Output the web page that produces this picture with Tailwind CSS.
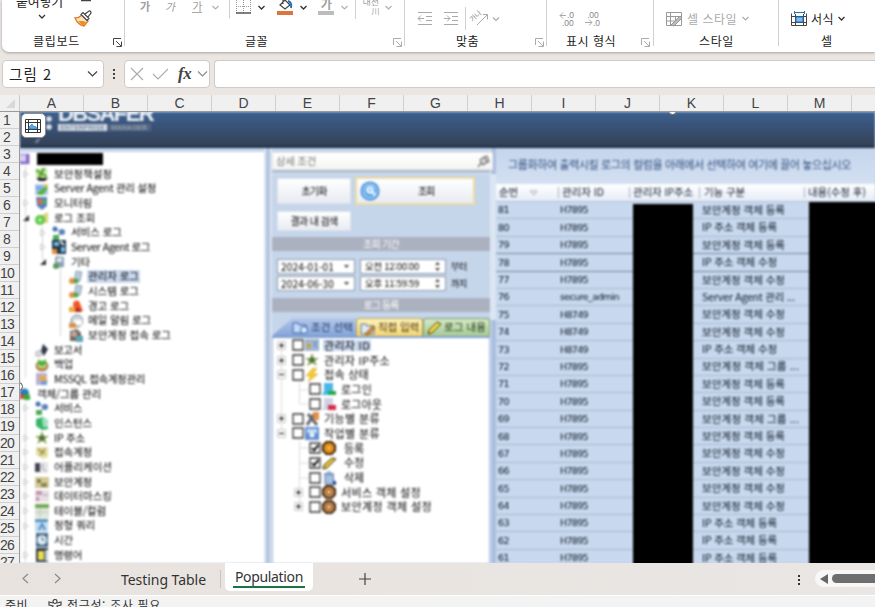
<!DOCTYPE html>
<html lang="ko">
<head>
<meta charset="utf-8">
<title>Population</title>
<script src="https://cdn.jsdelivr.net/npm/@tailwindcss/browser@4"></script>
</head>
<body class="w-[875px] h-[607px] overflow-hidden bg-[#ece6e3] font-['Noto_Sans_CJK_KR','Noto_Sans',sans-serif] text-[12px] leading-none text-[#222]">
<div class="flex h-[607px] w-[875px] flex-col overflow-hidden">

<!-- Ribbon -->
<header class="ml-[2px] flex h-[52px] shrink-0 rounded-bl-[7px] bg-white shadow-[0_1px_3px_rgba(0,0,0,0.3)]">
  <section class="relative flex w-[122px] flex-col">
    <div class="flex h-[32px] shrink-0 items-start overflow-hidden">
      <div class="ml-[14px] flex w-[50px] flex-col">
        <span data-w="47" class="-mt-[6px] h-[14px] self-start whitespace-nowrap text-[13px] leading-[14px]">붙여넣기</span>
        <svg class="mt-[6px] ml-[22px]" width="8" height="6" fill="none" stroke="#333" stroke-width="1.3"><path d="M1 1l3 3 3-3"/></svg>
      </div>
      <svg class="ml-[8px]" width="22" height="30" fill="none"><path d="M7 .5h10" stroke="#444" stroke-width="1.5"/><path d="M1 18q4 0 7-3l6 6-4 5q-6-1-9-8z" fill="#fbe3c4" stroke="#e07b1c" stroke-width="1.3"/><path d="M4 21l5 5 3-4-3-1z" fill="#ed8b24"/><path d="M7 14.500l2-2 6 6-2 2zM11 14l4-3q2-.5 2 2l-3 4" fill="#fff" stroke="#444" stroke-width="1.2"/></svg>
    </div>
    <div class="flex h-[17px] shrink-0 items-center"><span data-w="47" class="ml-[31px] whitespace-nowrap">클립보드</span><svg class="mt-[3px] ml-[33px]" width="9" height="9" fill="none" stroke="#444"><path d="M.5 7V.5H8M3 3l5 5M8.500 3.500v5h-5"/></svg></div>
  </section>
  <section class="mb-[6px] flex w-[280px] flex-col border-l border-[#d0d0d0]">
    <div class="flex h-[32px] shrink-0 items-start overflow-hidden text-[#a0a0a0]">
      <span class="ml-[15px] text-[11px] font-bold leading-[13px]">가</span>
      <span class="ml-[16px] inline-block -skew-x-12 text-[11px] leading-[13px]">가</span>
      <span class="ml-[16px] border-b border-[#aaa] text-[11px] leading-[12px]">가</span>
      <svg class="mt-[5px] ml-[10px]" width="7" height="6" fill="none" stroke="#b0b0b0" stroke-width="1.2"><path d="M.5 1l3 3 3-3"/></svg>
      <svg class="ml-[10px]" width="28" height="19" fill="none"><path d="M.5 0v18.500" stroke="#cfcfcf"/><path d="M7.500 0v13M21.500 0v13M14.500 0v13M7 6.500h14" stroke="#999" stroke-dasharray="1 1"/><path d="M7 13h15" stroke="#555" stroke-width="1.5"/></svg>
      <svg class="mt-[5px] ml-[1px]" width="7" height="6" fill="none" stroke="#333" stroke-width="1.3"><path d="M.5 1l3 3 3-3"/></svg>
      <svg class="ml-[12px]" width="17" height="15" fill="none"><path d="M3 5l5-5 5 5-5 4zM6 0v4" fill="#fff" stroke="#444" stroke-width="1.2"/><path d="M11 1q4 1 3 7" stroke="#2372b9" stroke-width="2"/><path d="M0 11h16v4H0z" fill="#dc7440"/></svg>
      <svg class="mt-[5px] ml-[6px]" width="7" height="6" fill="none" stroke="#333" stroke-width="1.3"><path d="M.5 1l3 3 3-3"/></svg>
      <span class="ml-[11px] w-[16px] border-b-4 border-[#bcbcbc] text-center text-[12px] font-bold leading-[11px]"><i class="relative -top-[2px] not-italic">가</i></span>
      <svg class="mt-[5px] ml-[7px]" width="7" height="6" fill="none" stroke="#b0b0b0" stroke-width="1.2"><path d="M.5 1l3 3 3-3"/></svg>
      <span class="ml-[7px] h-[19px] border-l border-[#d0d0d0]"></span>
      <span class="-mt-[3px] ml-[6px] flex w-[17px] flex-col text-[9px] leading-[10px]"><b class="whitespace-nowrap font-normal">내천</b><b class="pl-[9px] text-[8px] leading-[8px] font-normal">川</b></span>
      <svg class="mt-[5px] ml-[6px]" width="7" height="6" fill="none" stroke="#b0b0b0" stroke-width="1.2"><path d="M.5 1l3 3 3-3"/></svg>
    </div>
    <div class="flex h-[17px] shrink-0 items-center"><span data-w="23" class="ml-[120px] whitespace-nowrap">글꼴</span><svg class="mt-[3px] ml-[125px]" width="9" height="9" fill="none" stroke="#aaa"><path d="M.5 7V.5H8M3 3l5 5M8.500 3.500v5h-5"/></svg></div>
  </section>
  <section class="mb-[6px] flex w-[142px] flex-col border-l border-[#d0d0d0]">
    <div class="flex h-[32px] shrink-0 items-start">
      <svg class="ml-[12px] shrink-0" width="90" height="32" fill="none" stroke="#aaa"><path d="M1 12.500h14M9 16.500h6M9 20.500h6M1 24.500h14M1 18.500h6M4 15.500l-3 3 3 3M27 12.500h14M35 16.500h6M35 20.500h6M27 24.500h14M27 18.500h6M30 15.500l3 3-3 3"/><path d="M48.500 7v23" stroke="#d0d0d0"/><path d="M60 25l10-10M66 14.500h4.500v5" /><path d="M76 17.500l3 3 3-3" stroke-width="1.2"/><text x="55" y="21" transform="rotate(-43 57 21)" font-size="7" fill="#888" stroke="none">가나</text></svg>
    </div>
    <div class="flex h-[17px] shrink-0 items-center"><span data-w="23" class="ml-[51px] whitespace-nowrap">맞춤</span><svg class="mt-[3px] ml-[56px]" width="9" height="9" fill="none" stroke="#aaa"><path d="M.5 7V.5H8M3 3l5 5M8.500 3.500v5h-5"/></svg></div>
  </section>
  <section class="mb-[6px] flex w-[107px] flex-col border-l border-[#d0d0d0]">
    <div class="flex h-[32px] shrink-0 items-start">
      <svg class="ml-[11px] shrink-0" width="50" height="32" fill="none" stroke="#aaa" font-family="Liberation Sans" font-size="8.500"><path d="M8 15.500H2M5 12.500l-3 3 3 3M27 22.500h7M31 19.500l3 3-3 3"/><g fill="#888" stroke="none"><text x="9" y="18">.0</text><text x="4" y="26">.00</text><text x="29" y="18">.00</text><text x="35" y="26">.0</text></g></svg>
    </div>
    <div class="flex h-[17px] shrink-0 items-center"><span data-w="50" class="ml-[19px] whitespace-nowrap">표시 형식</span><svg class="mt-[3px] ml-[25px]" width="9" height="9" fill="none" stroke="#aaa"><path d="M.5 7V.5H8M3 3l5 5M8.500 3.500v5h-5"/></svg></div>
  </section>
  <section class="mb-[6px] flex w-[125px] flex-col border-l border-[#d0d0d0]">
    <div class="flex h-[32px] shrink-0 items-start">
      <svg class="ml-[12px]" width="17" height="32" fill="none" stroke="#999"><path d="M.5 12.500h15v13H.5zM4.500 12v13M1 16.500h14M9.500 16v5M1 21h8"/><path d="M5 25l9-9 2 2-8 8z" fill="#bbb"/></svg>
      <span data-w="50" class="mt-[13px] ml-[4px] whitespace-nowrap text-[#aaa]">셀 스타일</span>
      <svg class="mt-[16px] ml-[5px]" width="7" height="6" fill="none" stroke="#aaa" stroke-width="1.2"><path d="M.5 1l3 3 3-3"/></svg>
    </div>
    <div class="flex h-[17px] shrink-0 items-center"><span data-w="35" class="ml-[45px] whitespace-nowrap">스타일</span></div>
  </section>
  <section class="mb-[6px] flex w-[97px] flex-col border-l border-[#d0d0d0]">
    <div class="flex h-[32px] shrink-0 items-start">
      <svg class="ml-[12px]" width="17" height="32" fill="none" stroke="#444"><path d="M.5 13.500v12h15v-12M4.500 14v11M12.500 14v11M1 16.500h15M1 22.500h15"/><path d="M5 17h7v5H5z" fill="#7cbcf0" stroke="#2372b9"/><path d="M3 12.500h11M3.500 11v3M13.500 11v3" stroke="#2372b9"/></svg>
      <span data-w="23" class="mt-[13px] ml-[3px] whitespace-nowrap">서식</span>
      <svg class="mt-[16px] ml-[4px]" width="8" height="6" fill="none" stroke="#333" stroke-width="1.3"><path d="M.5 1l3 3 3-3"/></svg>
    </div>
    <div class="flex h-[17px] shrink-0 items-center"><span class="ml-[42px]">셀</span></div>
  </section>
</header>

<!-- Formula bar -->
<div class="mt-[8px] flex h-[28px] shrink-0 pl-[2px]">
  <div class="flex w-[102px] items-center justify-between rounded-[4px] border border-[#cfcac7] bg-white pr-[5px] pl-[6px]"><span data-w="43" class="whitespace-nowrap text-[14.5px]">그림 2</span><svg width="11" height="8" fill="none" stroke="#444" stroke-width="1.2"><path d="M1 1.500l4.500 4.500L10 1.500"/></svg></div>
  <svg class="ml-[8px]" width="4" height="28" fill="#444"><path d="M1 9h2v2H1zM1 13h2v2H1zM1 17h2v2H1z"/></svg>
  <div class="ml-[8px] flex w-[86px] items-center rounded-[4px] border border-[#cfcac7] bg-white">
    <svg class="ml-[5px]" width="38" height="14" fill="none" stroke="#aaa" stroke-width="1.1"><path d="M1 1l12 12M13 1L1 13M23 7l5 5L38 2"/></svg>
    <span class="ml-[10px] w-[15px] font-['Liberation_Serif',serif] text-[17px] leading-[18px] font-bold text-[#444] italic tracking-[-0.5px]">fx</span>
    <svg class="ml-[4px]" width="11" height="8" fill="none" stroke="#888" stroke-width="1.1"><path d="M1 1.500l4.500 4.500L10 1.500"/></svg>
  </div>
  <div class="ml-[4px] flex-1 rounded-l-[4px] border border-r-0 border-[#cfcac7] bg-white"></div>
</div>

<!-- Column headers -->
<div class="mt-[7px] flex h-[17px] shrink-0 border-b border-[#999] bg-[#f0f0f0] font-['Liberation_Sans',sans-serif] text-[14px] text-[#444]">
  <div class="flex w-[20px] shrink-0 items-end justify-end border-r border-[#c9c9c9] pr-[4px] pb-[3px]"><svg width="9" height="9"><path d="M9 0v9H0z" fill="#d8d8d8"/></svg></div>
  <div id="cols" class="flex w-[855px] shrink-0 overflow-hidden"></div>
</div>

<!-- Sheet -->
<div class="flex h-[451px] shrink-0 overflow-hidden">
  <div id="rows" class="w-[20px] shrink-0 overflow-hidden border-r border-[#999] bg-[#f0f0f0] font-['Liberation_Sans',sans-serif] text-[14px] text-[#444]"></div>

  <div class="relative h-[451px] w-[855px] overflow-hidden bg-[#c5d5ea]">
    <div class="flex h-full flex-col bg-[#c5d5ea] blur-[0.8px]">
      <div class="flex h-[36px] shrink-0 border-b-2 border-[#1b2e48] bg-linear-to-b from-[#3c6090] to-[#344156]">
        <svg class="ml-[10px]" width="28" height="34"><g fill="#dfe6ef"><circle cx="19" cy="7" r="2.800"/><circle cx="19" cy="15" r="2.800"/></g><path d="M5 31q1-4 6-5l-4 5z" fill="#8795a9"/></svg>
        <div class="w-[110px] overflow-hidden">
          <div data-w="95" class="-mt-[9px] h-[21px] whitespace-nowrap font-['Liberation_Sans',sans-serif] text-[22px] leading-[22px] font-bold text-[#f1f5fa]">DBSAFER</div>
          <div class="flex h-[7px] w-[93px] font-['Liberation_Sans',sans-serif] text-[7px] leading-[7px] font-bold"><span class="w-[49px] overflow-hidden bg-[#dfe5ee] text-center text-[#7a879b]">ENTERPRISE</span><span class="w-[44px] overflow-hidden bg-[#52637f] text-center text-[#8f9db3]">MANAGER</span></div>
        </div>
      </div>

      <div class="flex min-h-0 flex-1">
        <!-- Navigation tree -->
        <div class="mt-[4px] w-[244px] shrink-0 overflow-hidden bg-white"><div class="relative" id="nav"><svg class="absolute top-0 left-0" width="60" height="412" fill="none" stroke="#d5d5d5"><path d="M5.500 14v212M22.500 74v34M40.500 117v67M5.500 250v160"/></svg></div></div>
        <div class="w-[8px] shrink-0 border-x-2 border-[#dbe5f2] bg-[#b4c5dd]"></div>

        <!-- Search panel -->
        <div class="flex w-[218px] shrink-0 flex-col pt-[4px]">
          <div class="relative z-10 flex h-[18px] w-[221px] shrink-0 items-center justify-between border border-[#e6e6e6] bg-linear-to-b from-white to-[#f5f5f3] pr-[2px] pl-[3px] text-[10.5px] text-[#777]"><span data-w="40" class="whitespace-nowrap">상세 조건</span><svg width="14" height="14" fill="none" stroke="#777" stroke-width="1.3"><path d="M2 13l3-4M4 6l4-3 3 5-4 3zM8 3l3-1 2 5-2 2" fill="#ddd"/></svg></div>
          <div class="h-[4px] shrink-0 border-b border-[#dfe8f4] bg-[#aebdd2]"></div>
          <div class="flex h-[33px] shrink-0 items-center gap-[4px] pl-[5px] text-[10px] text-black">
            <div class="flex h-[26px] w-[74px] items-center justify-center border border-[#dbe2ea] bg-linear-to-b from-white to-[#e8ebf2]"><span data-w="25" class="whitespace-nowrap">초기화</span></div>
            <div class="flex h-[28px] w-[120px] items-center border-2 border-[#ecdc9f] bg-linear-to-b from-white to-[#e8ebf2]"><svg class="ml-[3px]" width="20" height="20"><circle cx="10" cy="10" r="9.500" fill="#3e8bd8"/><circle cx="10" cy="10" r="7.500" fill="#e4f2fe"/><circle cx="10" cy="10" r="6.500" fill="#58a4ea"/><circle cx="10" cy="9" r="3" fill="#a4d2fb" stroke="#fff" stroke-width="1.600"/><path d="M12 11l3 3" stroke="#fff" stroke-width="2"/></svg><span data-w="16" class="ml-[38px] whitespace-nowrap">조회</span></div>
          </div>
          <div class="mt-[4px] ml-[5px] flex h-[20px] w-[74px] shrink-0 items-center justify-center border border-[#dbe2ea] bg-linear-to-b from-white to-[#e8ebf2] text-[10px] text-black"><span data-w="47" class="whitespace-nowrap">결과 내 검색</span></div>
          <div class="mt-[6px] flex h-[14px] shrink-0 items-center justify-center bg-[#abb1bf] text-[10px] text-white"><span data-w="36" class="whitespace-nowrap">조회 기간</span></div>
          <div class="mt-[8px] flex h-[15px] shrink-0 items-center pl-[5px] text-[10px] text-black">
            <div class="flex h-full w-[78px] items-center justify-between border border-[#8f9bad] bg-white pr-[5px] pl-[3px]"><span data-w="53" class="whitespace-nowrap">2024-01-01</span><svg width="5" height="3"><path d="M0 0h5L2.500 3z" fill="#444"/></svg></div>
            <div class="ml-[5px] flex h-full w-[86px] items-center justify-between border border-[#8f9bad] bg-white pr-[5px] pl-[4px]"><span data-w="54" class="whitespace-nowrap text-[9.5px]">오전 12:00:00</span><svg width="5" height="9"><path d="M0 3h5L2.500 0zM0 6h5L2.500 9z" fill="#444"/></svg></div>
            <span data-w="16" class="ml-[5px] whitespace-nowrap text-[9px]">부터</span>
          </div>
          <div class="mt-[2px] flex h-[15px] shrink-0 items-center pl-[5px] text-[10px] text-black">
            <div class="flex h-full w-[78px] items-center justify-between border border-[#8f9bad] bg-white pr-[5px] pl-[3px]"><span data-w="53" class="whitespace-nowrap">2024-06-30</span><svg width="5" height="3"><path d="M0 0h5L2.500 3z" fill="#444"/></svg></div>
            <div class="ml-[5px] flex h-full w-[86px] items-center justify-between border border-[#8f9bad] bg-white pr-[5px] pl-[4px]"><span data-w="54" class="whitespace-nowrap text-[9.5px]">오후 11:59:59</span><svg width="5" height="9"><path d="M0 3h5L2.500 0zM0 6h5L2.500 9z" fill="#444"/></svg></div>
            <span data-w="16" class="ml-[5px] whitespace-nowrap text-[9px]">까지</span>
          </div>
          <div class="mt-[7px] flex h-[14px] shrink-0 items-center justify-center bg-[#abb1bf] text-[10px] text-white"><span data-w="35" class="whitespace-nowrap">로그 등록</span></div>
          <div class="mt-[6px] flex h-[20px] shrink-0 border-b-2 border-[#7f9fd0] text-[10.5px]">
            <div class="flex w-[84px] items-center bg-linear-to-b from-[#b5c9ea] to-[#84a4d8] pl-[20px] [clip-path:polygon(24%_0,100%_0,100%_100%,0_100%)]"><svg width="17" height="16"><path d="M1 4h5l1 2h7v8H1z" fill="#c5dafa" stroke="#335aa5"/><circle cx="12" cy="11" r="3.500" fill="#dcecff" stroke="#335aa5"/></svg><span data-w="42" class="ml-[2px] whitespace-nowrap text-[#1c3362]">조건 선택</span></div>
            <div class="flex w-[67px] items-center rounded-t-[3px] border border-b-0 border-[#b7a55f] bg-linear-to-b from-[#fff3b9] to-[#f4d36b] pl-[3px]"><svg width="16" height="16"><path d="M1 4h5l1 2h7v8H1z" fill="#dfe8f5" stroke="#566e94"/><path d="M5 14l8-8 2 2-7 7z" fill="#e99b31" stroke="#704414"/></svg><span data-w="41" class="ml-[2px] whitespace-nowrap text-[#41330f]">직접 입력</span></div>
            <div class="flex w-[67px] items-center rounded-t-[3px] border border-b-0 border-[#7d9a74] bg-linear-to-b from-[#d5e9c4] to-[#a7cb94] pl-[3px]"><svg width="16" height="16"><path d="M1 14l1-4 8-8 4 2-9 9z" fill="#f6d843" stroke="#3d3613"/></svg><span data-w="42" class="ml-[1px] whitespace-nowrap text-[#20351f]">로그 내용</span></div>
          </div>
          <div id="filters" class="relative min-h-0 flex-1 overflow-hidden border-x border-[#a7bbdc] bg-white"><svg class="absolute top-0 left-0" width="40" height="180" fill="none" stroke="#ddd"><path d="M8.500 12v86M26.500 44v22h10M26.500 52h10M26.500 103v66M26.500 110h10M26.500 125h10M26.500 140h10"/></svg></div>
        </div>
        <div class="w-[6px] shrink-0 border-l border-[#dfe8f4] bg-[#aabfdf] pt-[26px]"><div class="h-[146px] bg-[#dce6f3]"></div></div>

        <!-- Log table -->
        <div class="relative flex min-w-0 flex-1 flex-col">
          <div class="flex h-[36px] shrink-0 items-center bg-linear-to-b from-[#c6d5ec] to-[#d3e0f2] pb-[3px] pl-[12px] text-[11px] text-[#2f4d7c]"><span data-w="343" class="whitespace-nowrap">그룹화하여 출력시킬 로그의 컬럼을 아래에서 선택하여 여기에 끌어 놓으십시오</span></div>
          <div class="flex h-[18px] shrink-0 items-center border-b border-[#b4c1d2] bg-linear-to-b from-white to-[#e6edf7] text-[10.5px] text-[#111c2e]">
            <div class="flex w-[62px] items-center pl-[3px]"><span data-w="19" class="whitespace-nowrap">순번</span><svg class="ml-[12px]" width="8" height="6" fill="none" stroke="#aaa"><path d="M0 1h7L4 5z"/></svg></div>
            <div class="w-[71px] border-l border-[#aab4c3] pl-[3px]"><span data-w="42" class="inline-block whitespace-nowrap">관리자 ID</span></div>
            <div class="w-[70px] border-l border-[#aab4c3] pl-[3px]"><span data-w="60" class="inline-block whitespace-nowrap">관리자 IP주소</span></div>
            <div class="w-[105px] border-l border-[#aab4c3] pl-[4px]"><span data-w="41" class="inline-block whitespace-nowrap">기능 구분</span></div>
            <div class="border-l border-[#aab4c3] pl-[3px]"><span data-w="58" class="inline-block whitespace-nowrap">내용(수정 후)</span></div>
          </div>
          <div id="logs" class="min-h-0 flex-1 overflow-hidden bg-[#c8d8ee]"></div>
          <div class="absolute top-[56px] -bottom-[4px] left-[137px] w-[60px] bg-black"></div>
          <div class="absolute top-[54px] -right-[4px] -bottom-[4px] left-[313px] bg-black"></div>
        </div>
      </div>
    </div>

    <!-- Picture selection handles and the in-cell placement button -->
    <div class="absolute top-[-6px] left-[648px] h-[9px] w-[9px] rounded-full border border-[#666] bg-white"></div>
    <div class="absolute top-[270px] left-[-6px] h-[9px] w-[9px] rounded-full border border-[#555] bg-white"></div>
    <div class="absolute top-[1px] left-[1px] flex h-[25px] w-[25px] items-center justify-center rounded-[5px] border border-[#8b8b8b] bg-white"><svg width="17" height="14" fill="none" stroke="#333" stroke-width="1"><path d="M.5.500h15v13H.500zM3.500 0v14M12.500 0v14M0 3.500h16M0 10.500h16"/><path d="M4 10V8l3-3 2 3 1-1 2 2v1z" fill="#54a7e8" stroke="#2372b9" stroke-width=".6"/></svg></div>
  </div>
</div>

<!-- Sheet tabs -->
<div class="flex h-[32px] shrink-0 bg-linear-to-r from-[#e9e3df] to-[#e9e6e3] font-['Noto_Sans','Noto_Sans_CJK_KR',sans-serif] text-[14px] text-[#333]">
  <svg class="ml-[21px]" width="42" height="32" fill="none" stroke="#8a8a8a" stroke-width="1.200"><path d="M7 11l-5 4.500L7 20M34 11l5 4.500-5 4.500"/></svg>
  <span class="mt-[10px] ml-[58px] w-[99px]"><span data-w="85" class="inline-block whitespace-nowrap">Testing Table</span></span>
  <span class="mt-[7px] h-[18px] w-[5px] border-l border-[#c9c4c0]"></span>
  <div class="h-[28px] w-[88px] rounded-b-[5px] bg-white pt-[7px] pl-[8px]"><div class="h-[18px] w-[72px] border-b-2 border-[#1a7343] pl-[2px]"><span data-w="68" class="inline-block whitespace-nowrap">Population</span></div></div>
  <svg class="ml-[46px]" width="12" height="32" fill="none" stroke="#444" stroke-width="1.200"><path d="M6 10v12M0 16h12"/></svg>
  <svg class="ml-[426px]" width="4" height="32" fill="#333"><path d="M1 12h2v2H1zM1 16h2v2H1zM1 20h2v2H1z"/></svg>
  <div class="mt-[7px] ml-[14px] flex h-[17px] flex-1 items-center rounded-l-full bg-[#f7f7f7] pl-[5px]"><svg width="8" height="10"><path d="M8 0v10L0 5z" fill="#666"/></svg><div class="ml-[4px] h-[9px] flex-1 rounded-l-full bg-[#6e6e6e]"></div></div>
</div>
<footer class="flex h-[12px] shrink-0 items-start overflow-hidden border-t border-[#fff] bg-[#f3f3f3] text-[12px] leading-[18px] text-[#333]">
  <span data-w="23" class="ml-[5px] whitespace-nowrap">준비</span>
  <svg class="mt-[3px] ml-[20px]" width="15" height="12" fill="none" stroke="#444" stroke-width="1.200"><circle cx="7" cy="2.500" r="2"/><path d="M5 4L1 3v3l4 1-2 5M9 4l4-1v3L9 7l2 5M7 9v3"/></svg>
  <span data-w="94" class="ml-[4px] whitespace-nowrap">접근성: 조사 필요</span>
</footer>
</div>

<script>
const $ = id => document.getElementById(id);
$('cols').innerHTML = [...'ABCDEFGHIJKLM', ''].map(c => `<div class="flex h-[16px] w-[64px] shrink-0 items-center justify-center border-r border-[#cfcfcf]">${c}</div>`).join('');
$('rows').innerHTML = Array.from({length: 27}, (_, i) => `<div class="flex h-[17px] items-center justify-end border-b border-[#cfcfcf] ${i < 9 ? 'pr-[9px]' : 'pr-[5px]'}"><span data-w="${i < 9 ? 7 : 14}">${i + 1}</span></div>`).join('');

// Small 14px icons used by both trees
const icons = {
  root: '<path d="M0 1h11v12H0z" fill="#8368c4"/><path d="M0 2h7v8H0z" fill="#d8cdf4"/>',
  shield: '<path d="M1 2l11-1v8l-6 4-5-4z" fill="#c3e59e"/><path d="M1 3l11 7M9 1l-5 10" stroke="#4d9a30" stroke-width="2"/><path d="M1 11h12l-3 3H4z" fill="#222"/>',
  chart: '<path d="M0 2h13v11H0z" fill="#b9caec"/><path d="M1 4h7v4H1z" fill="#7ca9e4"/><path d="M2 10l4-2 6-5v5l-4 5H3z" fill="#55b34a"/><path d="M8 2h5v4z" fill="#f1c64f"/>',
  monitor: '<path d="M1 1h11v9l-5 4-5-4z" fill="#5c7fbe"/><path d="M3 3h4v5H3z" fill="#e06d45"/><path d="M7 3h4v5H7z" fill="#50a66a"/>',
  logs: '<path d="M5 5l8-4v11H5z" fill="#d9d37c"/><circle cx="5" cy="9" r="5" fill="#57c43c"/><path d="M5 6v6M2 9h6" stroke="#d5ffd0"/>',
  nodes: '<path d="M3 3l6 3-5 5" stroke="#888" fill="none"/><circle cx="3" cy="3" r="2.500" fill="#3d71b4"/><circle cx="10" cy="6" r="3" fill="#5680be"/><path d="M1 9h6v5H1z" fill="#4cab58"/>',
  agent: '<path d="M0 0h14v14H0z" fill="#24394c"/><path d="M2 2h5v4H2zM9 7h4v5H9z" fill="#74b8dc"/><path d="M0 9h5v5H0z" fill="#e48c3d"/><path d="M8 1l4 4" stroke="#eee" stroke-width="2"/>',
  server: '<path d="M4 1l8 1v10l-9 1V3z" fill="#8da2b6"/><path d="M5 3h5v4H5z" fill="#dce7ef"/><circle cx="4" cy="11" r="3" fill="#5b985b"/>',
  log: '<path d="M7 1l6 1-2 9-6 1z" fill="#bdcbd9" stroke="#8ba3bb"/><circle cx="3" cy="11" r="3" fill="#e6903f"/><circle cx="7" cy="11" r="2.500" fill="#4aa54d"/>',
  warn: '<path d="M4 5q1-5 6-3l4 10H5z" fill="#ef5628"/><path d="M8 8l5 5H6z" fill="#b1221e"/><path d="M0 8h6v5H0z" fill="#eda73c"/>',
  mail: '<circle cx="8" cy="7" r="6" fill="#ced6dc" stroke="#7a8790"/><path d="M5 6h8v5H5z" fill="#fff"/><path d="M0 9h7v5H0z" fill="#d8934b"/>',
  lock: '<path d="M1 3l7-2 4 4v8H1z" fill="#76665f"/><circle cx="5" cy="6" r="3" fill="#bba89d"/><path d="M7 8h7v6H7z" fill="#5ba5b8"/>',
  report: '<path d="M8 1l5 5-4 7-3-5z" fill="#303548"/><path d="M1 9l5-2v6H1z" fill="#dfe2e6" stroke="#aaa"/>',
  backup: '<ellipse cx="7" cy="8" rx="6.500" ry="5.500" fill="#ad8953"/><ellipse cx="7" cy="7" rx="4" ry="3" fill="#f2dfa6"/><path d="M3 1l4 3 4-3v5L7 9 3 6z" fill="#41ba35"/>',
  sql: '<path d="M1 1h11v12H1z" fill="#bab0db"/><path d="M3 4h7l3 6-5 3z" fill="#e9aa46"/><path d="M6 9h6v4H6z" fill="#6d9edc"/>',
  group: '<circle cx="5" cy="6" r="5.500" fill="#277bbd"/><circle cx="8" cy="11" r="4" fill="#32ae35"/><circle cx="2" cy="10" r="3" fill="#d94834"/>',
  green: '<path d="M1 3l7-2 5 4v8l-6 1-6-4z" fill="#35b568"/><path d="M7 2l6 1v8H8z" fill="#a6dfc0"/>',
  star: '<path d="M7 0l2 5h5l-4 3 2 5-5-3-5 3 2-5-4-3h5z" fill="#8fa34d"/><circle cx="7" cy="7" r="2.500" fill="#446b4f"/>',
  key: '<path d="M1 2h12v10l-5 2-7-4z" fill="#e5e0a4"/><path d="M3 4l7 5M10 4L5 10" stroke="#a79b59" stroke-width="2"/>',
  app: '<path d="M0 3h6v9H0z" fill="#454454"/><path d="M5 2h8v11H5z" fill="#e4e4e9"/><path d="M8 4q-3 4 3 7" stroke="#999" fill="none"/>',
  acct: '<path d="M0 2h14v11H0z" fill="#d2c996"/><circle cx="4" cy="6" r="2" fill="#6f7349"/><path d="M6 8h6v4H6z" fill="#8d8552"/>',
  mask: '<path d="M0 1h14v12H0z" fill="#e6dfe5"/><path d="M1 2h6v4H1zM1 8h3v4H1z" fill="#c893ae"/><path d="M8 6h5" stroke="#999"/>',
  table: '<path d="M0 0h14v14H0z" fill="#e0e6dc"/><path d="M0 0h14v4H0z" fill="#72ab55"/><path d="M0 8h14M5 4v10" stroke="#c3c9bf"/>',
  query: '<path d="M0 0h13v13H0z" fill="#c1dbed"/><path d="M0 0h13v3H0z" fill="#5996be"/><path d="M4 11l3-6 3 6" stroke="#558ec9" stroke-width="2" fill="none"/>',
  clock: '<path d="M1 0h12v14H1z" fill="#45647f"/><circle cx="7" cy="7" r="5" fill="#e4eff7" stroke="#7fa1bb"/><path d="M7 4v3h3" stroke="#385c8a" fill="none"/>',
  cmd: '<path d="M1 0h12v14H1z" fill="#2c3a48"/><path d="M3 3h6v9H3z" fill="#eddb4c"/><path d="M10 2h3v11h-3z" fill="#c1d0d8"/>',
  card: '<path d="M0 2h14v10H0z" fill="#a8bfdf" stroke="#6884aa"/><path d="M2 5h4v5H2z" fill="#c0a641"/><path d="M8 5h4M8 8h4" stroke="#426899"/>',
  bolt: '<path d="M8 0L1 8h5l-3 6 10-8H8l4-6z" fill="#f8cc24" stroke="#bc8f20" stroke-width=".5"/>',
  login: '<path d="M2 1h9v7l2 5H0l2-4z" fill="#48b7e8"/><path d="M6 9h8v4H6z" fill="#26a747"/>',
  logout: '<path d="M2 1h9v7l2 5H0l2-4z" fill="#cfd2e5"/><path d="M6 8h8v5H6z" fill="#d62c4c"/>',
  tools: '<path d="M2 13L10 1M3 2l9 11" stroke="#62656d" stroke-width="3"/><path d="M8 0h6v8H9z" fill="#e39045"/>',
  box: '<path d="M0 1h14v13H0z" fill="#628fd0"/><path d="M2 3h10v4H2z" fill="#c4dcf5"/><circle cx="7" cy="9" r="2.500" fill="#edf5ff"/>',
  gear: '<path d="M4 0h6l4 4v6l-4 4H4l-4-4V4z" fill="#3d2008"/><circle cx="7" cy="7" r="5.200" fill="#f59b19"/><circle cx="7" cy="7" r="2.300" fill="#ffdc70" stroke="#ad5d0d"/>',
  gear2: '<path d="M4 0h6l4 4v6l-4 4H4l-4-4V4z" fill="#3d2714"/><circle cx="7" cy="7" r="5.200" fill="#d08c48"/><circle cx="7" cy="7" r="2.300" fill="#ffe3ba" stroke="#6e3c19"/>',
  pen: '<path d="M1 13l1-4 8-7 4 1-9 9z" fill="#edc42f" stroke="#2b2718"/>',
  trash: '<path d="M3 3h8l1 10H3z" fill="#a9c0e3" stroke="#557aac"/><path d="M2 3h10M5 1h4" stroke="#557aac"/><path d="M11 10h3v4h-3z" fill="#24488c"/>'
};
const icon = (n, s = 14) => `<svg class="shrink-0" width="${s}" height="${s}" viewBox="0 0 14 14">${icons[n]}</svg>`;

// [indent, icon, label, width, arrow]
const nav = [
 [0,'root','',66,0],[1,'shield','보안정책설정',58,1],[1,'chart','Server Agent 관리 설정',102,0],[1,'monitor','모니터링',38,1],[1,'logs','로그 조회',41,2],
 [2,'nodes','서비스 로그',51,1],[2,'agent','Server Agent 로그',79,1],[2,'server','기타',19,2],
 [3,'log','관리자 로그',51,0],[3,'log','시스템 로그',51,0],[3,'warn','경고 로그',41,0],[3,'mail','메일 알림 로그',63,0],[3,'lock','보안계정 접속 로그',83,0],
 [1,'report','보고서',28,0],[1,'backup','백업',19,0],[1,'sql','MSSQL 접속계정관리',91,0],
 [0,'group','객체/그룹 관리',64,0],[1,'nodes','서비스',28,1],[1,'green','인스턴스',38,0],[1,'star','IP 주소',31,1],[1,'key','접속계정',38,1],[1,'app','어플리케이션',58,1],[1,'acct','보안계정',38,1],[1,'mask','데이터마스킹',58,1],[1,'table','테이블/컬럼',52,1],[1,'query','정형 쿼리',41,1],[1,'clock','시간',19,0],[1,'cmd','명령어',28,1]];
const arrows = ['', '<path d="M1 2l4 3-4 3z" fill="#fff" stroke="#bbb"/>', '<path d="M6 2v6H0z" fill="#333"/>'];
const pads = [-12, 3, 20, 37];
$('nav').insertAdjacentHTML('beforeend', nav.map(([d, ic, t, w, a], i) => `<div class="relative flex h-[14.67px] items-center whitespace-nowrap text-[10.5px] text-black" style="padding-left:${Math.max(0, pads[d])}px">${d ? `<svg class="mr-[5px] shrink-0" width="7" height="10">${arrows[a]}</svg>` : ''}${icon(ic, d ? 14 : 12)}${t ? `<span class="${i === 8 ? 'ml-[4px] bg-[#c9d8ef] px-[1px] py-[1px]' : 'ml-[5px]'}"><span class="inline-block" data-w="${w}">${t}</span></span>` : '<span class="ml-[5px] h-[12px] w-[66px] bg-black"></span>'}</div>`).join(''));

// [indent, expander, checked, icon, label, width]
const filters = [[0,'+',0,'card','관리자 ID',46],[0,'+',0,'star','관리자 IP주소',66],[0,'-',0,'bolt','접속 상태',45],[1,'',0,'login','로그인',31],[1,'',0,'logout','로그아웃',41],[0,'+',0,'tools','기능별 분류',56],[0,'-',0,'box','작업별 분류',56],[1,'',1,'gear','등록',20],[1,'',1,'pen','수정',20],[1,'',0,'trash','삭제',20],[1,'+',0,'gear2','서비스 객체 설정',80],[1,'+',0,'gear2','보안계정 객체 설정',91]];
$('filters').insertAdjacentHTML('beforeend', filters.map(([d, e, c, ic, t, w], i) => `<div class="relative flex h-[14.7px] items-center whitespace-nowrap text-[11px] text-black" style="padding-left:${d ? 21 : 4}px"><svg class="shrink-0" width="9" height="9">${e ? `<path d="M.5.500h8v8h-8z" fill="#f5f5f5" stroke="#ccc"/><path d="M2 4.500h5${e === '+' ? 'M4.500 2v5' : ''}" stroke="#111"/>` : ''}</svg><svg class="ml-[6px] shrink-0" width="12" height="12" fill="none"><path d="M1 1h10v10H1z" fill="#fff" stroke="#333" stroke-width="1.300"/>${c ? '<path d="M3 6l2 2.500L9.500 3" stroke="#111" stroke-width="2"/>' : ''}</svg><span class="ml-[1px] flex">${icon(ic)}</span><span class="${i === 0 ? 'ml-[4px] bg-[#c9d8ef] px-[1px]' : i > 6 && i < 10 ? 'ml-[8px]' : 'ml-[5px]'}"><span class="inline-block" data-w="${w}">${t}</span></span></div>`).join(''));

const A = ['보안계정 객체 등록', 83], B = ['IP 주소 객체 등록', 75], C = ['IP 주소 객체 수정', 75], D = ['보안계정 객체 수정', 83], E = ['Server Agent 관리 ...', 93], F = ['보안계정 객체 그룹 ...', 97];
$('logs').innerHTML = [A,B,A,C,D,E,D,D,C,F,A,A,F,A,D,D,D,D,B,B,B].map(([t, w], i) => {
  const id = i === 5 ? 'secure_admin' : i > 5 && i < 9 ? 'H8749' : 'H7895';
  return `<div class="flex h-[17.4px] items-center whitespace-nowrap border-b text-[10.5px] text-[#0c1626] ${i === 2 || i === 3 ? 'border-[#74849c]' : 'border-[#a8b9ce]'}"><span class="w-[64px] pl-[2px] font-['DejaVu_Sans',sans-serif] text-[9.5px]"><span class="inline-block" data-w="11">${81 - i}</span></span><span class="w-[142px] font-['DejaVu_Sans',sans-serif] text-[9.5px]"><span class="inline-block" data-w="${i === 5 ? 59 : 28}">${id}</span></span><span class="inline-block" data-w="${w}">${t}</span></div>`;
}).join('');

const range = document.createRange();
function fit() {
  const els = [...document.querySelectorAll('[data-w]')];
  els.forEach(el => { el.style.letterSpacing = '0px'; });
  const widths = els.map(el => { range.selectNodeContents(el); return range.getBoundingClientRect().width; });
  els.forEach((el, i) => {
    el.style.letterSpacing = ((+el.dataset.w - widths[i]) / [...el.textContent].length).toFixed(3) + 'px';
  });
}
fit();
addEventListener('load', () => { fit(); requestAnimationFrame(fit); });
document.fonts.ready.then(fit);
// Style changes alter the body box, so tracking is measured again then
new ResizeObserver(fit).observe(document.body);
</script>
</body>
</html>
